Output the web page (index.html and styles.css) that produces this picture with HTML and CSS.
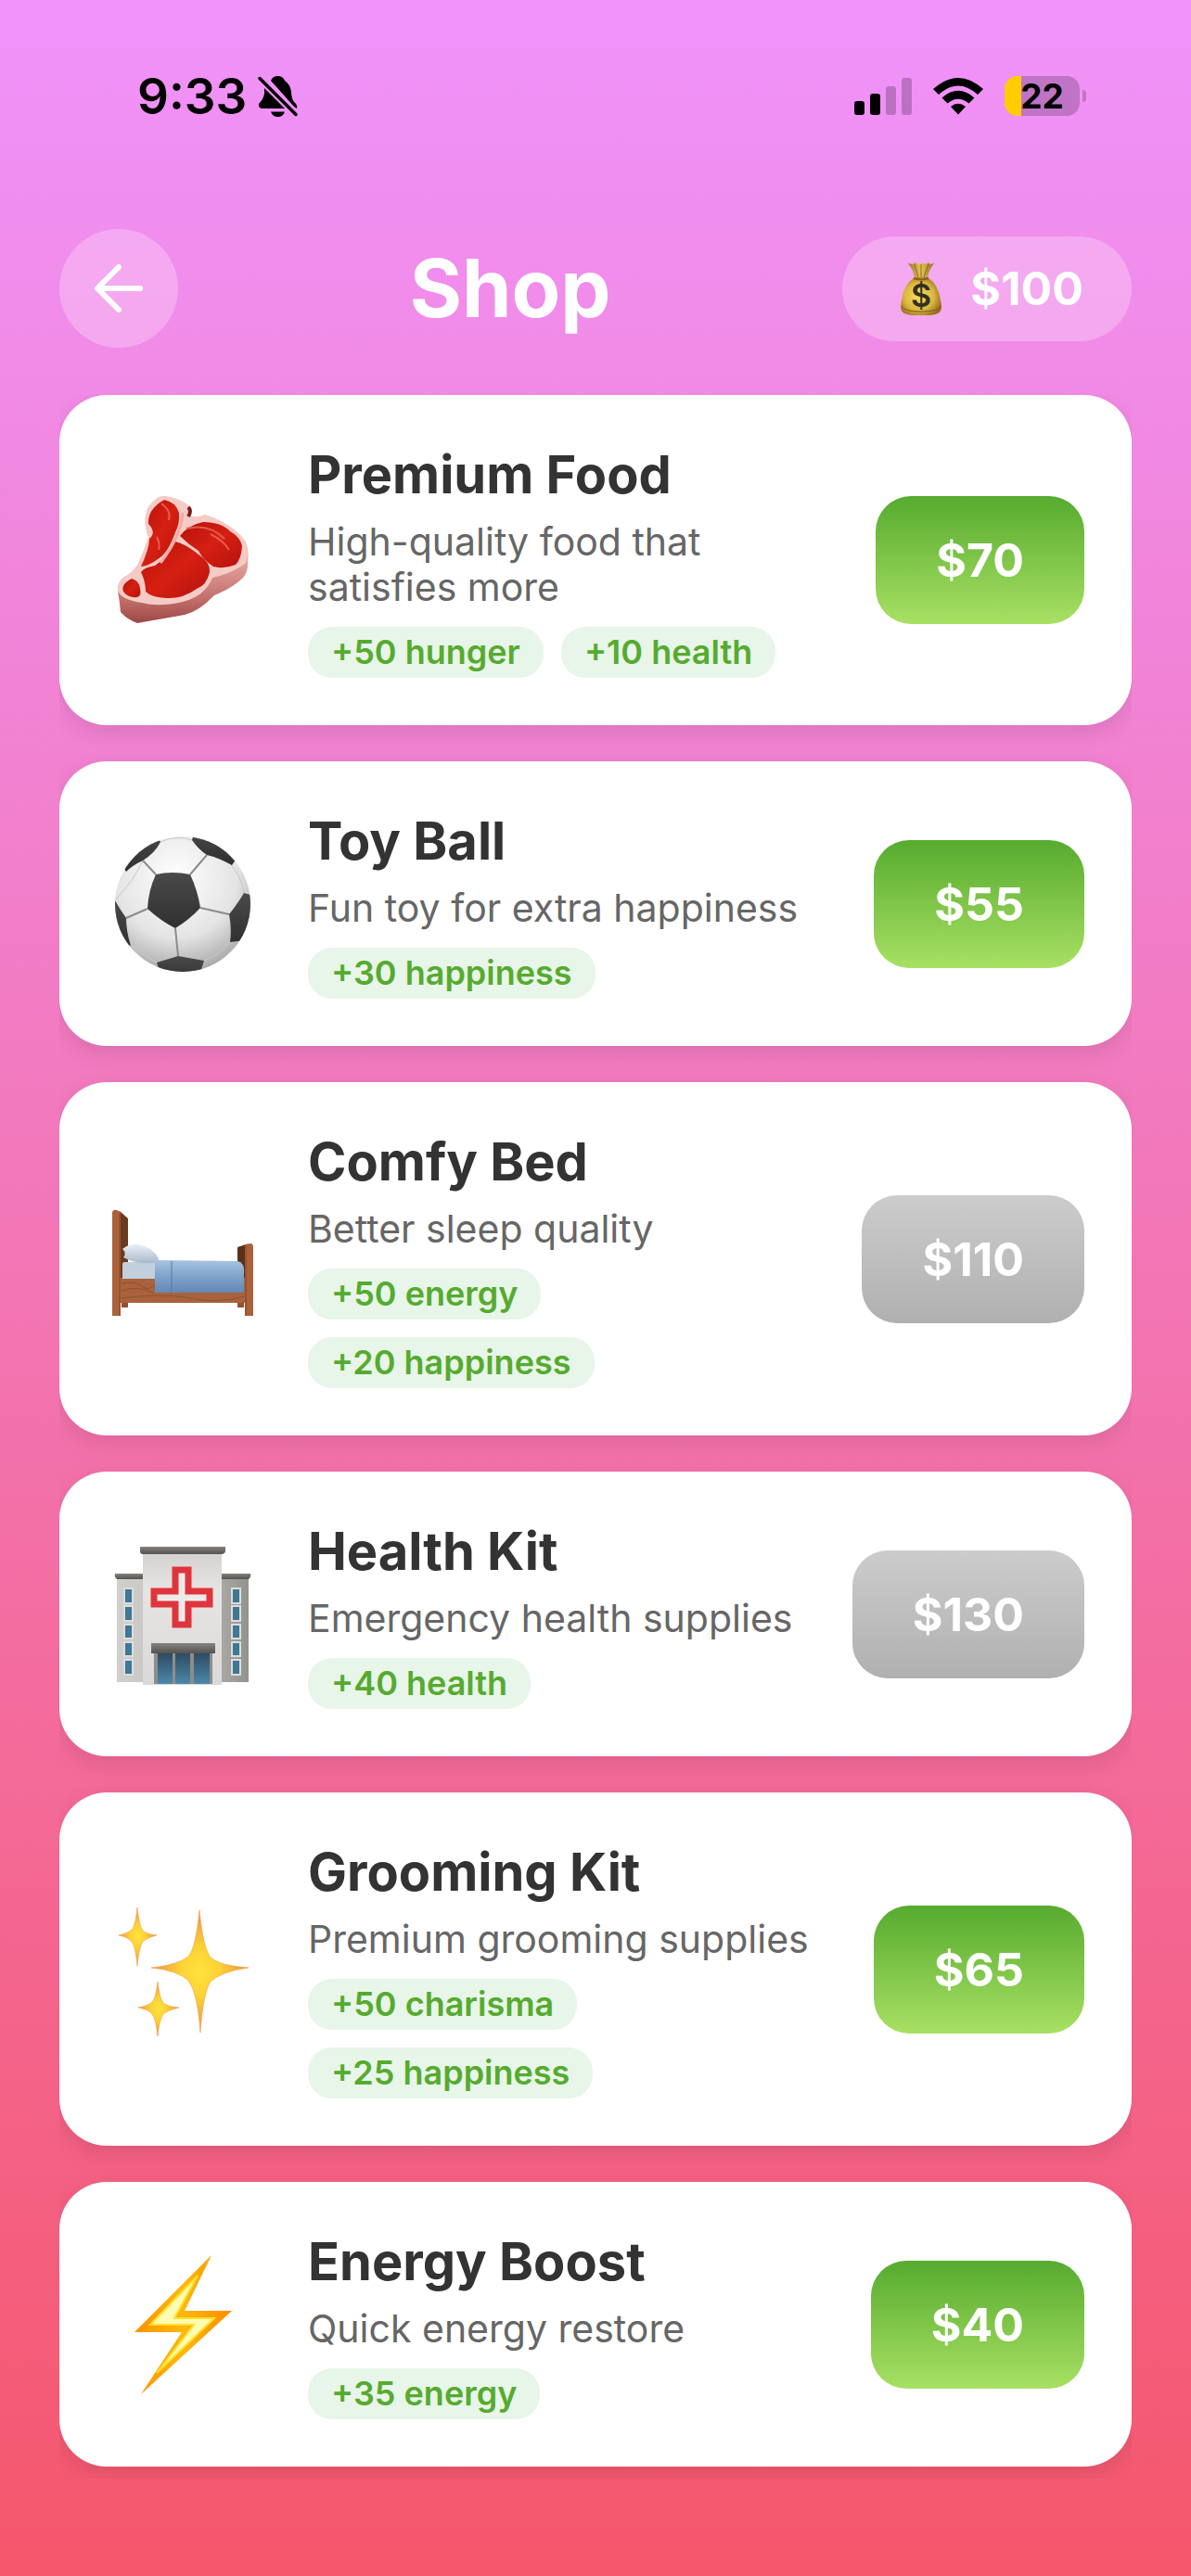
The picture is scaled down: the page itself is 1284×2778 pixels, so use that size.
FILE: index.html
```
<!DOCTYPE html>
<html lang="en">
<head>
<meta charset="utf-8">
<meta name="viewport" content="width=device-width, initial-scale=1">
<title>Shop</title>
<link rel="stylesheet" href="styles.css">
</head>

<body>
  <div class="status">
    <div class="status_left">
      <span class="time">9:33</span>
      <svg class="bell" width="44" height="46" viewBox="0 0 44 46">
        <path d="M14 6 Q16 1 21.500 1 Q27 1 29 6 Q35 10 36 18 Q36 25 39 29 Q43 32 42 36 L39 34 Z"/>
        <path d="M7 14 L29 36 L4 36 Q0 35 1 31 Q6 26 7 20 Z"/>
        <path d="M14 39.500 H29 Q27 45 21.500 45 Q16 45 14 39.500 Z"/>
        <path d="M2 3.500 L41 42.500" fill="none" stroke="#000" stroke-width="3.500" stroke-linecap="round"/>
      </svg>
    </div>
    <div class="status_right">
      <svg width="62" height="40" viewBox="0 0 62 40">
        <rect x="0" y="25" width="11" height="15" rx="3"/>
        <rect x="17" y="17" width="11" height="23" rx="3"/>
        <rect x="34" y="9" width="11" height="31" rx="3" opacity=".22"/>
        <rect x="51" y="0" width="11" height="40" rx="3" opacity=".22"/>
      </svg>
      <svg width="54" height="40" viewBox="0 0 54 40">
        <path d="M0 12 Q27 -12 54 12 L48 18 Q27 -1 6 18 Z"/>
        <path d="M9.500 21.500 Q27 6 44.500 21.500 L38.500 27.500 Q27 18 15.500 27.500 Z"/>
        <path d="M19 31 Q27 24.500 35 31 L27 39.500 Z"/>
      </svg>
      <div class="battery"><span class="level">22</span><i class="nub"></i></div>
    </div>
  </div>

  <div class="header">
    <button class="back" type="button" aria-label="Back">
      <svg width="52" height="52" viewBox="0 0 52 52">
        <path d="M49 26 H4 M26 3 L3 26 L26 49" fill="none" stroke="#fff" stroke-width="6" stroke-linecap="round" stroke-linejoin="round"/>
      </svg>
    </button>
    <h1>Shop</h1>
    <div class="balance">
      <svg width="58" height="58" viewBox="0 0 58 58">
        <defs>
          <radialGradient id="gBag" cx=".45" cy=".5" r=".6">
            <stop offset="0" stop-color="#f6df62"/>
            <stop offset=".6" stop-color="#dcb63f"/>
            <stop offset="1" stop-color="#8f6a1c"/>
          </radialGradient>
          <linearGradient id="gNeck" x1="0" x2="1" y1="0" y2="0">
            <stop offset="0" stop-color="#9a7226"/>
            <stop offset=".5" stop-color="#e6c65a"/>
            <stop offset="1" stop-color="#8d671f"/>
          </linearGradient>
        </defs>
        <path d="M15 2 L20 3 L22 1 L26 3 L30 1 L34 3 L37 1 L39 3 L43 2 Q37 9 36 18 L22 18 Q21 9 15 2 Z" fill="url(#gNeck)"/>
        <path d="M22 3 L26 17 M29 3 V17 M37 3 L32 17" stroke="#8d671f" stroke-width="1" fill="none"/>
        <path d="M22 17 H36 Q48 25 50 42 Q53 53 47 56 Q40 59 29 58 Q18 59 11 56 Q5 53 8 42 Q10 25 22 17 Z" fill="url(#gBag)"/>
        <path d="M21 18 Q29 21 37 18" stroke="#8a6212" stroke-width="2" fill="none"/>
        <path d="M8 48 Q10 54 29 54 Q48 54 50 48" stroke="#7d5b14" stroke-width="1" fill="none"/>
        <text class="bag_sign" x="29" y="49" text-anchor="middle">$</text>
      </svg>
      <span>$100</span>
    </div>
  </div>

  <ul class="list">
    <li class="card">
      <svg class="pic" viewBox="0 0 166 166">
        <defs>
          <linearGradient id="gSide" x1="0" x2="0" y1="0" y2="1">
            <stop offset=".4" stop-color="#f0b9b4"/>
            <stop offset=".8" stop-color="#c4706c"/>
            <stop offset="1" stop-color="#9c4845"/>
          </linearGradient>
          <linearGradient id="gMeat" x1="0" x2="1" y1="0" y2="1">
            <stop offset="0" stop-color="#b3120c"/>
            <stop offset=".5" stop-color="#d61f12"/>
            <stop offset="1" stop-color="#b5130d"/>
          </linearGradient>
        </defs>
        <path d="M63 14 Q80 17 88 24 Q91 30 90 35 Q98 38 106 34 Q136 44 149 62 Q154 72 152 84 Q153 95 147 102 Q136 113 116 121 Q100 138 84 142 L33 151 Q22 147 15 139 Q14 128 12 116 Q12 106 18 102 Q29 96 34 87 Q42 68 45 58 Q38 40 45 26 Q54 13 63 14 Z" fill="url(#gSide)"/>
        <path d="M63 14 Q80 17 88 24 Q91 30 90 35 Q98 38 106 34 Q136 44 149 62 Q154 75 150 86 Q136 97 114 102 Q106 122 82 128 Q56 134 38 129 Q16 126 12 116 Q12 106 18 102 Q29 96 34 87 Q42 68 45 58 Q38 40 45 26 Q54 13 63 14 Z" fill="#f6cbc5"/>
        <path d="M62 18 Q74 20 78 32 Q79 44 74 53 Q66 76 55 82 Q46 89 37 90 Q46 70 46 60 Q54 53 45 44 Q44 28 62 18 Z" fill="url(#gMeat)"/>
        <path d="M74 63 Q86 66 99 77 Q112 85 111 96 Q108 110 97 114 Q82 125 64 124 Q48 123 42 117 Q42 106 37 96 Q40 91 52 89 Q62 83 74 63 Z" fill="url(#gMeat)"/>
        <path d="M79 57 Q88 45 104 42 Q124 42 133 52 Q144 58 146 68 Q145 82 139 88 Q126 93 115 90 Q104 83 99 73 Q88 66 79 57 Z" fill="url(#gMeat)"/>
        <path d="M27 103 Q36 106 36 114 Q38 121 33 123 Q23 124 18 117 Q15 109 27 103 Z" fill="url(#gMeat)"/>
        <path d="M88 26 Q92 30 88 36" stroke="#7c1d1a" stroke-width="4" fill="none"/>
        <path d="M82 32 Q80 58 58 86" stroke="#f3a9a2" stroke-width="3" fill="none"/>
        <path d="M86 49 Q110 43 127 60 M54 58 Q58 66 56 72 M59 22 Q70 30 67 40 M112 55 Q126 62 132 72" stroke="#e65a4c" stroke-width="2" fill="none"/>
      </svg>
      <div class="info">
        <h2>Premium Food</h2>
        <p>High-quality food that satisfies more</p>
        <div class="tags"><span>+50 hunger</span><span>+10 health</span></div>
      </div>
      <button class="buy" type="button">$70</button>
    </li>

    <li class="card">
      <svg class="pic" viewBox="0 0 166 166">
        <defs>
          <radialGradient id="gBall" cx=".45" cy=".3" r=".75">
            <stop offset="0" stop-color="#fff"/>
            <stop offset=".6" stop-color="#e4e4e4"/>
            <stop offset="1" stop-color="#a0a0a0"/>
          </radialGradient>
          <linearGradient id="gPatch" x1="0" x2="0" y1="0" y2="1">
            <stop offset="0" stop-color="#4a4a4a"/>
            <stop offset="1" stop-color="#303030"/>
          </linearGradient>
          <clipPath id="cBall"><circle cx="82" cy="83" r="73"/></clipPath>
        </defs>
        <circle cx="82" cy="83" r="73" fill="url(#gBall)"/>
        <g clip-path="url(#cBall)">
          <path d="M53 51 L39 36 M90 51 L108 30 M101 87 L132 94 M74 109 L77 139 M44 88 L21 98" stroke="#8c8c8c" stroke-width="2" fill="none"/>
          <path d="M39 36 Q30 56 10 78 M58 16 Q75 8 92 14 M134 40 Q146 56 148 72 M133 123 Q122 138 105 144 M54 146 Q38 138 25 126" stroke="#c8c8c8" stroke-width="1" fill="none"/>
          <path d="M53 51 Q71 47 90 51 Q98 68 101 87 Q89 100 74 109 Q58 101 44 88 Q45 68 53 51 Z" fill="url(#gPatch)"/>
          <path d="M58 16 Q52 28 39 36 Q28 41 21 48 L10 30 L50 0 Z" fill="url(#gPatch)"/>
          <path d="M92 14 Q99 24 108 30 Q121 33 135 41 L150 20 L96 0 Z" fill="url(#gPatch)"/>
          <path d="M148 71 Q141 83 132 94 Q135 109 133 124 L166 120 L166 76 Z" fill="url(#gPatch)"/>
          <path d="M54 146 L77 139 L105 144 L98 166 H60 Z" fill="url(#gPatch)"/>
          <path d="M9 79 Q15 90 21 98 Q21 112 26 128 L0 120 V80 Z" fill="url(#gPatch)"/>
        </g>
      </svg>
      <div class="info">
        <h2>Toy Ball</h2>
        <p>Fun toy for extra happiness</p>
        <div class="tags"><span>+30 happiness</span></div>
      </div>
      <button class="buy" type="button">$55</button>
    </li>

    <li class="card">
      <svg class="pic" viewBox="0 0 166 166">
        <defs>
          <linearGradient id="gBlanket" x1="0" x2="0" y1="0" y2="1">
            <stop offset="0" stop-color="#a9c3e0"/>
            <stop offset=".5" stop-color="#7fa3ca"/>
            <stop offset="1" stop-color="#6288b4"/>
          </linearGradient>
          <linearGradient id="gPillow" x1="0" x2="0" y1="0" y2="1">
            <stop offset="0" stop-color="#eaf1f8"/>
            <stop offset="1" stop-color="#a9b9cb"/>
          </linearGradient>
        </defs>
        <path d="M16 129 H23 V135 H16 Z M141 129 H148 V135 H141 Z" fill="#94502f"/>
        <path d="M14 31 L23 39 V106 H14 Z" fill="#6b3a20"/>
        <path d="M141 70 L150 67 V106 H141 Z" fill="#5c311b"/>
        <path d="M15 103 H149 V130 H15 Z" fill="#a9623c"/>
        <path d="M16 109 Q30 106 38 112 T52 110 M16 117 Q34 111 50 119 M16 125 Q60 119 90 125 T148 123" stroke="#8f5130" stroke-width="1" fill="none"/>
        <path d="M17 88 Q17 86 20 86 H56 V104 H17 Z" fill="#c2cfdd"/>
        <path d="M17 72 Q24 66 34 67 Q50 70 56 82 Q56 87 48 87 Q30 88 18 81 Q22 76 17 72 Z" fill="url(#gPillow)"/>
        <path d="M52 87 Q53 84 56 84 L141 85 Q148 87 148 94 V119 H52 Z" fill="url(#gBlanket)"/>
        <path d="M70 85 V119" stroke="#557ba8" stroke-width="1"/>
        <path d="M6 32 Q7 29 11 30 L15 32 V144 H6 Z M149 68 Q150 66 155 66 Q158 66 158 70 V144 H149 Z" fill="#ab623b"/>
        <path d="M14 33 V144 M150 68 V144" stroke="#824626" stroke-width="1"/>
      </svg>
      <div class="info">
        <h2>Comfy Bed</h2>
        <p>Better sleep quality</p>
        <div class="tags"><span>+50 energy</span><span>+20 happiness</span></div>
      </div>
      <button class="buy" type="button" disabled>$110</button>
    </li>

    <li class="card">
      <svg class="pic" viewBox="0 0 166 166">
        <defs>
          <linearGradient id="gWing" x1="0" x2="1" y1="0" y2="0">
            <stop offset="0" stop-color="#d0cfcb"/>
            <stop offset=".6" stop-color="#bdbcb8"/>
            <stop offset="1" stop-color="#93928e"/>
          </linearGradient>
          <linearGradient id="gWall" x1="0" x2="0" y1="0" y2="1">
            <stop offset="0" stop-color="#d2d1ce"/>
            <stop offset=".3" stop-color="#e6e5e3"/>
            <stop offset="1" stop-color="#dad9d7"/>
          </linearGradient>
          <linearGradient id="gRoof" x1="0" x2="0" y1="0" y2="1">
            <stop offset="0" stop-color="#85827f"/>
            <stop offset="1" stop-color="#55524f"/>
          </linearGradient>
          <linearGradient id="gDoor" x1="0" x2="0" y1="0" y2="1">
            <stop offset="0" stop-color="#2c4a5e"/>
            <stop offset="1" stop-color="#4d88aa"/>
          </linearGradient>
        </defs>
        <path d="M11 42 H39 V156 H11 Z M124 42 H153 V156 H124 Z" fill="url(#gWing)"/>
        <path d="M9 39 H40 V45 H11 Q8 43 9 39 Z M124 39 H155 Q156 43 153 45 H124 Z" fill="url(#gRoof)"/>
        <g fill="#3f7796" stroke="#dddcda" stroke-width="2">
          <path d="M19 55 H28 V71 H19 Z M19 74 H28 V90 H19 Z M19 94 H28 V109 H19 Z M19 113 H28 V128 H19 Z M19 132 H28 V148 H19 Z"/>
          <path d="M135 55 H144 V71 H135 Z M135 74 H144 V90 H135 Z M135 94 H144 V109 H135 Z M135 113 H144 V128 H135 Z M135 132 H144 V148 H135 Z"/>
        </g>
        <path d="M39 14 H124 V159 H39 Z" fill="url(#gWall)"/>
        <path d="M36 10 H128 V15 Q127 18 124 18 H39 Q36 18 36 15 Z" fill="url(#gRoof)"/>
        <path d="M74 35 H88 V58 H111 V72 H88 V94 H74 V72 H51 V58 H74 Z" fill="#ecebe9" stroke="#e0343c" stroke-width="7"/>
        <path d="M51 124 H114 V158 H51 Z" fill="#8f8d8a"/>
        <path d="M55 124 H71 V158 H55 Z M74 124 H90 V158 H74 Z M94 124 H111 V158 H94 Z" fill="url(#gDoor)"/>
        <path d="M48 114 H117 V125 H48 Z" fill="url(#gRoof)"/>
      </svg>
      <div class="info">
        <h2>Health Kit</h2>
        <p>Emergency health supplies</p>
        <div class="tags"><span>+40 health</span></div>
      </div>
      <button class="buy" type="button" disabled>$130</button>
    </li>

    <li class="card">
      <svg class="pic" viewBox="0 0 166 166">
        <defs>
          <radialGradient id="gStar">
            <stop offset="0" stop-color="#ffe23c"/>
            <stop offset=".4" stop-color="#fcd235"/>
            <stop offset="1" stop-color="#ee9048"/>
          </radialGradient>
        </defs>
        <g fill="url(#gStar)" stroke="#f0a045" stroke-width=".6">
          <path d="M100 19 Q104 60 112 70 Q122 79 153 81 Q124 85 112 96 Q104 108 101 151 Q98 108 88 95 Q77 84 48 81 Q76 78 88 69 Q96 60 100 19 Z"/>
          <path d="M33 16 Q35 36 39 41 Q43 45 54 46 Q43 49 39 53 Q35 58 33 79 Q31 58 27 53 Q23 48 13 46 Q23 44 27 40 Q31 36 33 16 Z"/>
          <path d="M55 96 Q57 114 61 119 Q66 123 78 124 Q66 127 61 131 Q57 136 55 155 Q53 136 49 131 Q45 126 34 124 Q45 122 49 118 Q53 114 55 96 Z"/>
        </g>
      </svg>
      <div class="info">
        <h2>Grooming Kit</h2>
        <p>Premium grooming supplies</p>
        <div class="tags"><span>+50 charisma</span><span>+25 happiness</span></div>
      </div>
      <button class="buy" type="button">$65</button>
    </li>

    <li class="card">
      <svg class="pic" viewBox="0 0 166 166">
        <defs>
          <linearGradient id="gBolt" x1="0" x2="1" y1="0" y2="0">
            <stop offset="0" stop-color="#fb9200"/>
            <stop offset=".5" stop-color="#fdb80a"/>
            <stop offset="1" stop-color="#fb8c00"/>
          </linearGradient>
        </defs>
        <path d="M113 8 L84 68 H135 L37 158 L81 91 H30 Z" fill="url(#gBolt)"/>
        <path d="M98 30 L73 76 H116 L54 135 L94 83 H47 Z" fill="#fffbb0" stroke="#ffe02e" stroke-width="2"/>
      </svg>
      <div class="info">
        <h2>Energy Boost</h2>
        <p>Quick energy restore</p>
        <div class="tags"><span>+35 energy</span></div>
      </div>
      <button class="buy" type="button">$40</button>
    </li>
  </ul>
</body>
</html>
```

FILE: styles.css
```
* {margin:0;padding:0;box-sizing:border-box}
ul,li {list-style:none}
button {border:none;font-family:inherit;cursor:pointer}
svg {display:block;flex:none}
body {min-height:100vh;background:linear-gradient(#f093fb,#f5576c);font-family:Inter,"Liberation Sans",sans-serif}

.status {display:flex;justify-content:space-between;align-items:center;height:207px;padding:0 120px 0 148px;color:#000}
.status_left {display:flex;align-items:center;gap:12px}
.status_right {display:flex;align-items:center;gap:23px}
.time {font-size:53px;line-height:60px;font-weight:600}
.battery {position:relative;width:81px;height:43px;border-radius:14px;background:linear-gradient(90deg,#fc0 18px,rgba(0,0,0,.2) 18px);text-align:center}
.level {font-size:37px;line-height:43px;font-weight:700}
.nub {position:absolute;right:-7px;top:15px;width:4px;height:13px;border-radius:0 4px 4px 0;background:rgba(0,0,0,.2)}

.header {display:flex;justify-content:space-between;align-items:center;padding:40px 64px 51px;color:#fff}
.header h1 {font-size:86px;line-height:108px;font-weight:700}
.back {display:flex;justify-content:center;align-items:center;width:128px;height:128px;border-radius:50%;background:rgba(255,255,255,.25)}
.balance {display:flex;align-items:center;gap:24px;height:113px;padding:0 52px 0 56px;border-radius:57px;background:rgba(255,255,255,.25);font-size:50px;font-weight:700}
.bag_sign {font-size:34px;font-weight:600;fill:#33301f}

/* shadows are cut at the edges of the list */
.list {margin:0 64px;padding-bottom:13px;display:flex;flex-direction:column;gap:39px;overflow:hidden}
.card {display:flex;align-items:center;padding:51px;border-radius:51px;background:#fff;box-shadow:0 8px 24px rgba(0,0,0,.1)}
.pic {width:166px;height:166px;margin-right:51px}
.info {flex:1;margin-right:30px}
.info h2 {font-size:56px;line-height:70px;font-weight:700;color:#333}
.info p {margin:13px 0 18px;font-size:41px;line-height:49px;color:#666}
.tags {display:flex;flex-wrap:wrap;gap:19px}
.tags span {padding:0 25px;border-radius:26px;background:#e8f5e9;font-size:36px;line-height:55px;font-weight:600;color:#56ab2f}
.buy {height:138px;padding:0 65px;border-radius:38px;background:linear-gradient(#56ab2f,#a8e063);font-size:50px;font-weight:700;color:#fff}
.buy:disabled {background:linear-gradient(#ccc,#b0b0b0);cursor:default}
```
